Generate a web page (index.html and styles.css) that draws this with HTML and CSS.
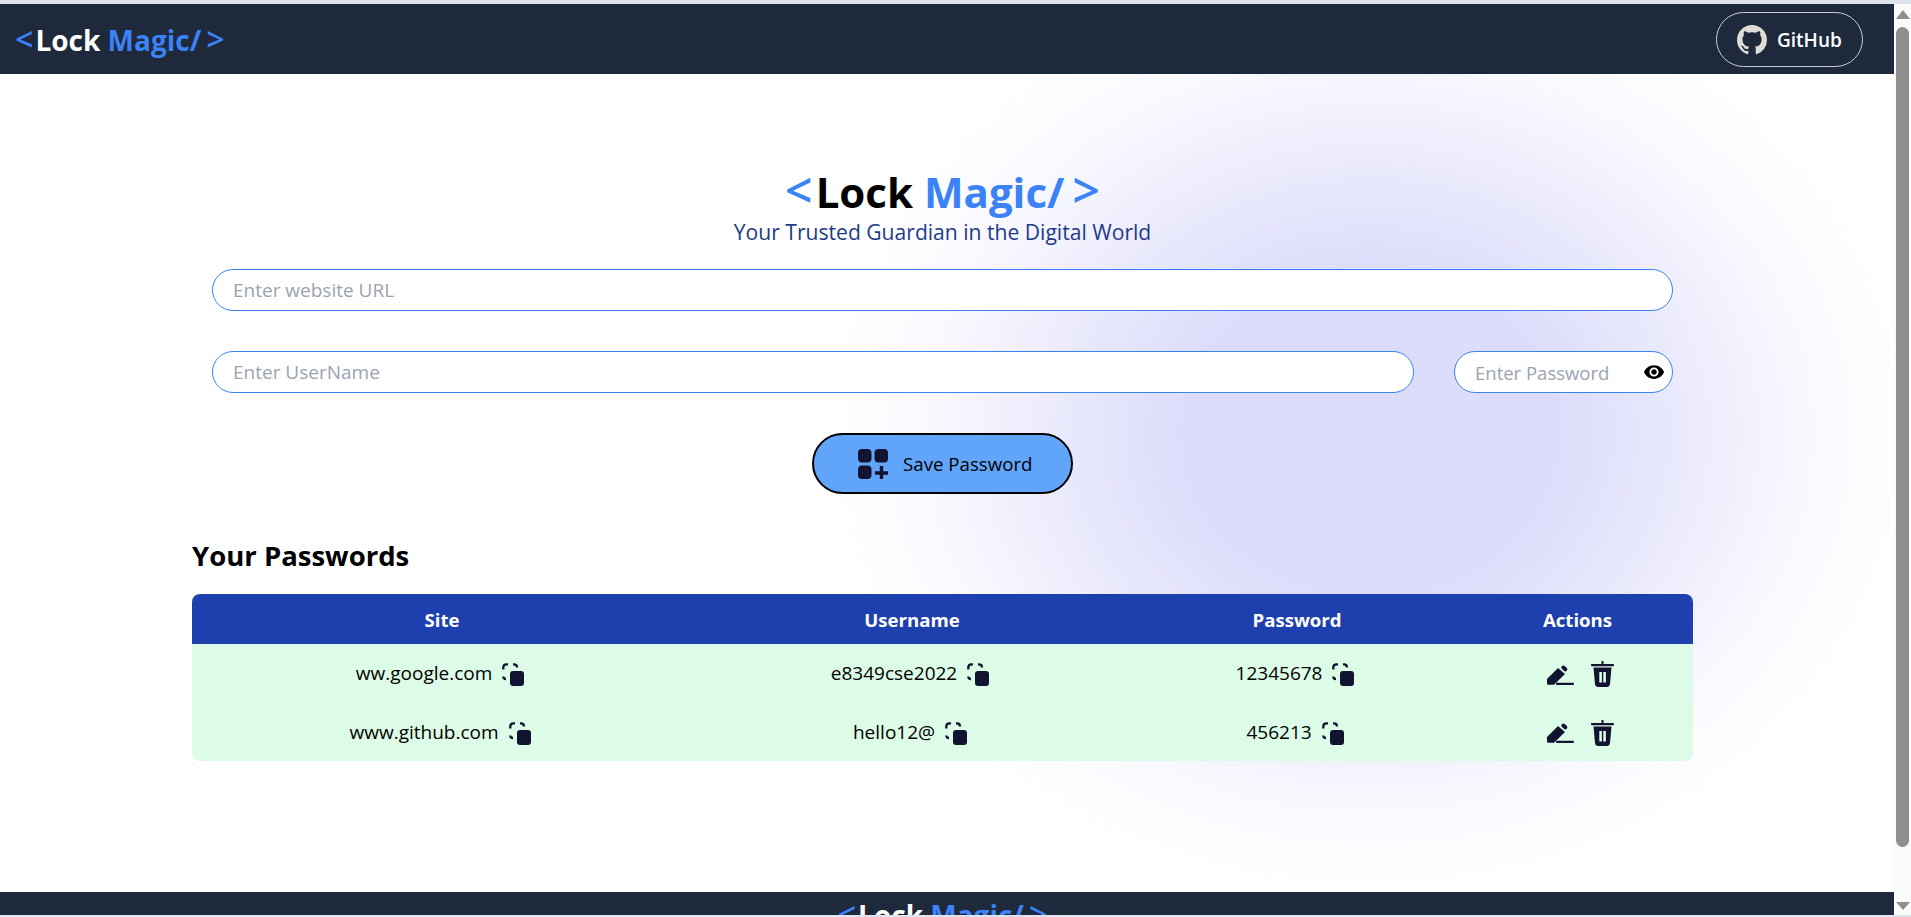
FILE: index.html
```html
<!DOCTYPE html>
<html lang="en">
<head>
    <meta charset="UTF-8">
    <title>Lock Magic</title>
    <link rel="stylesheet" href="styles.css">
</head>
<body>
    <div class="window">
        <div class="page">
            <nav class="navbar">
                <div class="logo"><span class="blue bracket-l">&lt;</span>Lock <span class="blue">Magic/</span><span class="blue bracket-r">&gt;</span></div>
                <a class="github-btn" href="#">
                    <svg class="github-icon" viewBox="0 0 16 16"><path fill="#e0dcd8" d="M8 0C3.58 0 0 3.58 0 8c0 3.54 2.29 6.53 5.47 7.59.4.07.55-.17.55-.38 0-.19-.01-.82-.01-1.49-2.01.37-2.53-.49-2.69-.94-.09-.23-.48-.94-.82-1.13-.28-.15-.68-.52-.01-.53.63-.01 1.08.58 1.23.82.72 1.21 1.87.87 2.33.66.07-.52.28-.87.51-1.07-1.78-.2-3.64-.89-3.64-3.95 0-.87.31-1.59.82-2.15-.08-.2-.36-1.02.08-2.12 0 0 .67-.21 2.2.82.64-.18 1.32-.27 2-.27s1.36.09 2 .27c1.53-1.04 2.2-.82 2.2-.82.44 1.1.16 1.92.08 2.12.51.56.82 1.27.82 2.15 0 3.07-1.87 3.75-3.65 3.95.29.25.54.73.54 1.48 0 1.07-.01 1.93-.01 2.2 0 .21.15.46.55.38A8.01 8.01 0 0 0 16 8c0-4.42-3.58-8-8-8z"/></svg>
                    <span>GitHub</span>
                </a>
            </nav>

            <main class="content">
                <h1 class="title"><span class="blue bracket-l">&lt;</span>Lock <span class="blue">Magic/</span><span class="blue bracket-r">&gt;</span></h1>
                <p class="tagline">Your Trusted Guardian in the Digital World</p>

                <form class="pass-form">
                    <input class="field" type="text" placeholder="Enter website URL">
                    <div class="field-row">
                        <input class="field" type="text" placeholder="Enter UserName">
                        <div class="password-box">
                            <input class="field" type="password" placeholder="Enter Password">
                            <svg class="eye-icon" viewBox="0 0 24 24"><path d="M12 4.500C7 4.500 2.700 7.600 1 12c1.700 4.400 6 7.500 11 7.500s9.300-3.100 11-7.500c-1.700-4.400-6-7.500-11-7.500zM12 17c-2.800 0-5-2.200-5-5s2.200-5 5-5 5 2.200 5 5-2.200 5-5 5zm0-8c-1.700 0-3 1.300-3 3s1.300 3 3 3 3-1.300 3-3-1.300-3-3-3z"/></svg>
                        </div>
                    </div>
                    <button class="save-btn" type="button">
                        <svg class="save-icon" viewBox="0 0 30 30"><rect width="13.500" height="13.500" rx="4"/><rect x="16.500" width="13.500" height="13.500" rx="4"/><rect y="16.500" width="13.500" height="13.500" rx="4"/><path d="M21.800 17h3.400v5.300H30v3.400h-4.800V30h-3.400v-4.300H17v-3.400h4.800z"/></svg>
                        Save Password
                    </button>
                </form>

                <h2 class="list-title">Your Passwords</h2>
                <table class="pass-table">
                    <thead>
                        <tr>
                            <th class="col-site">Site</th>
                            <th class="col-user">Username</th>
                            <th class="col-pass">Password</th>
                            <th class="col-actions">Actions</th>
                        </tr>
                    </thead>
                    <tbody>
                        <tr>
                            <td>ww.google.com <svg class="copy-icon" viewBox="0 0 22 23"><use href="#copy"/></svg></td>
                            <td>e8349cse2022 <svg class="copy-icon" viewBox="0 0 22 23"><use href="#copy"/></svg></td>
                            <td>12345678 <svg class="copy-icon" viewBox="0 0 22 23"><use href="#copy"/></svg></td>
                            <td class="actions"><svg class="edit-icon" viewBox="0 0 27 21"><use href="#edit"/></svg><svg class="trash-icon" viewBox="0 0 23 26"><use href="#trash"/></svg></td>
                        </tr>
                        <tr>
                            <td>www.github.com <svg class="copy-icon" viewBox="0 0 22 23"><use href="#copy"/></svg></td>
                            <td>hello12@ <svg class="copy-icon" viewBox="0 0 22 23"><use href="#copy"/></svg></td>
                            <td>456213 <svg class="copy-icon" viewBox="0 0 22 23"><use href="#copy"/></svg></td>
                            <td class="actions"><svg class="edit-icon" viewBox="0 0 27 21"><use href="#edit"/></svg><svg class="trash-icon" viewBox="0 0 23 26"><use href="#trash"/></svg></td>
                        </tr>
                    </tbody>
                </table>
            </main>

            <footer class="footer">
                <div class="logo"><span class="blue bracket-l">&lt;</span>Lock <span class="blue">Magic/</span><span class="blue bracket-r">&gt;</span></div>
            </footer>
        </div>

        <div class="scrollbar">
            <div class="arrow-up"></div>
            <div class="thumb"></div>
            <div class="arrow-down"></div>
        </div>
    </div>

    <!-- shared icons -->
    <svg class="icon-defs" width="0" height="0">
        <defs>
            <g id="copy">
                <rect x="8" y="8" width="14" height="15" rx="3" fill="#121331"/>
                <path d="M1.300 6.500V4.500Q1.300 1.300 4.500 1.300H6M11 1.300H12Q15 1.300 15 4.500M1.300 13.500Q1.300 16 4 16" fill="none" stroke="#121331" stroke-width="2.300"/>
            </g>
            <g id="edit" fill="#121331">
                <path d="M0 15 11 4 18 10 7 20.800H1.500C.5 20.800 0 20.300 0 19.300z"/>
                <path d="M16.300 3.500 18.300 5.300" fill="none" stroke="#121331" stroke-width="4" stroke-linecap="round"/>
                <rect x="9" y="18.700" width="18" height="2.200" rx="1"/>
            </g>
            <g id="trash" fill="#121331">
                <rect x="10.500" width="2" height="3.500"/>
                <rect y="3" width="23" height="2.300" rx=".8"/>
                <path fill-rule="evenodd" d="M2.500 6.500H20.500L19 23c-.2 1.800-1.400 3-3 3H7c-1.600 0-2.800-1.200-3-3zM8.300 11V21.500H10.900V11zM12.300 11V21.500H14.900V11z"/>
            </g>
        </defs>
    </svg>
</body>
</html>
```

FILE: styles.css
```css
* {
    box-sizing: border-box;
}
html, body {
    height: 100%;
    margin: 0;
    overflow: hidden;
}
body {
    background-color: #dfe3ee;
    padding: 4px 0 2px;
    font-family: "Open Sans", "Noto Sans", sans-serif;
    color: #000;
}
.window {
    display: flex;
    height: 100%;
    background-color: #fff;
}
.page {
    flex: 1;
    display: flex;
    flex-direction: column;
    overflow: hidden;
    background: radial-gradient(ellipse 540px 460px at 1370px 430px, #dcdcfb 0%, #dddcfb 35%, #e8e8fc 55%, #f5f5fe 75%, #fcfcff 90%, #fff 100%);
}
.blue {
    color: #3b82f6;
}
.bracket-l {
    margin-right: 2px;
    font-size: 1.15em;
    font-weight: 600;
    line-height: 0;
}
.bracket-r {
    margin-left: 5px;
    font-size: 1.15em;
    font-weight: 600;
    line-height: 0;
}

/* navbar */
.navbar {
    flex: 0 0 70px;
    display: flex;
    justify-content: space-between;
    align-items: center;
    padding: 0 31px 0 15px;
    background-color: #1e293b;
    color: #fff;
}
.logo {
    font-size: 28px;
    font-weight: 700;
    line-height: 32px;
    white-space: nowrap;
}
.navbar .logo {
    margin-top: 2px;
}
.github-btn {
    display: flex;
    align-items: center;
    gap: 10px;
    width: 147px;
    height: 55px;
    margin-top: 1px;
    padding-left: 20px;
    border: 1px solid #c9ccd2;
    border-radius: 28px;
    color: #fff;
    font-size: 19px;
    font-weight: 600;
    text-decoration: none;
}
.github-icon {
    width: 30px;
    height: 30px;
}

/* main content */
.content {
    flex: 1;
    width: 1501px;
    margin-left: 192px;
}
.title {
    margin: 96px 0 0;
    font-size: 42px;
    font-weight: 700;
    line-height: 44px;
    text-align: center;
}
.title .bracket-l {
    margin-right: 3px;
}
.title .bracket-r {
    margin-left: 8px;
}
.tagline {
    margin: 4px 0 0;
    font-size: 21.1px;
    line-height: 28px;
    text-align: center;
    color: #1e3a8a;
}
.pass-form {
    display: flex;
    flex-direction: column;
    align-items: center;
    gap: 40px;
    padding: 0 20px;
    margin-top: 23px;
}
.field {
    width: 100%;
    height: 42px;
    padding: 0 20px;
    border: 1px solid #3b82f6;
    border-radius: 21px;
    background-color: #fff;
    font-family: inherit;
    font-size: 19px;
    outline: none;
}
.field::placeholder {
    color: #9ca3af;
}
.field-row {
    display: flex;
    gap: 40px;
    width: 100%;
}
.password-box {
    position: relative;
    flex: 0 0 219px;
}
.password-box .field {
    font-size: 18.5px;
}
.eye-icon {
    position: absolute;
    top: 10px;
    right: 8px;
    width: 22px;
    height: 22px;
}
.save-btn {
    display: flex;
    align-items: center;
    gap: 15px;
    width: 261px;
    height: 61px;
    padding-left: 44px;
    border: 2px solid #000;
    border-radius: 31px;
    background-color: #60a5fa;
    color: #000;
    font-family: inherit;
    font-size: 18.7px;
    white-space: nowrap;
}
.save-icon {
    width: 30px;
    height: 30px;
    flex: none;
    fill: #121331;
}

/* table */
.list-title {
    margin: 44px 0 0;
    font-size: 27.5px;
    font-weight: 700;
    line-height: 36px;
}
.pass-table {
    width: 100%;
    margin-top: 20px;
    border-collapse: separate;
    border-spacing: 0;
    border-radius: 8px;
    overflow: hidden;
    table-layout: fixed;
    font-size: 19px;
}
.pass-table th {
    height: 50px;
    background-color: #1e40af;
    color: #fff;
    font-size: 18.6px;
    font-weight: 700;
    text-align: center;
}
.pass-table td {
    height: 58.5px;
    padding: 0 4px 0 0;
    background-color: #dcfce7;
    text-align: center;
}
.col-site {
    width: 500px;
}
.col-user {
    width: 440px;
}
.col-pass {
    width: 330px;
}
.copy-icon {
    width: 22px;
    height: 23px;
    margin-left: 5px;
    vertical-align: -6px;
}
.pass-table .actions {
    padding: 0 0 0 6px;
    white-space: nowrap;
}
.edit-icon {
    width: 27px;
    height: 21px;
    margin-right: 17px;
    vertical-align: middle;
}
.trash-icon {
    width: 23px;
    height: 26px;
    vertical-align: middle;
}
.icon-defs {
    position: absolute;
}

/* footer */
.footer {
    flex: 0 0 23px;
    overflow: hidden;
    padding-right: 9px;
    background-color: #1e293b;
    color: #fff;
    text-align: center;
}
.footer .logo {
    margin-top: 7px;
}

/* fake scrollbar */
.scrollbar {
    flex: 0 0 17px;
    display: flex;
    flex-direction: column;
    align-items: center;
    background-color: #fbfbfb;
}
.arrow-up {
    margin-top: 6px;
    border: 7px solid transparent;
    border-top: 0;
    border-bottom: 9px solid #8f8f8f;
}
.thumb {
    flex: 0 0 820px;
    width: 13px;
    margin-top: 8px;
    border-radius: 7px;
    background-color: #8f8f8f;
}
.arrow-down {
    margin-top: auto;
    margin-bottom: 5px;
    border: 7px solid transparent;
    border-bottom: 0;
    border-top: 8px solid #8f8f8f;
}
```
